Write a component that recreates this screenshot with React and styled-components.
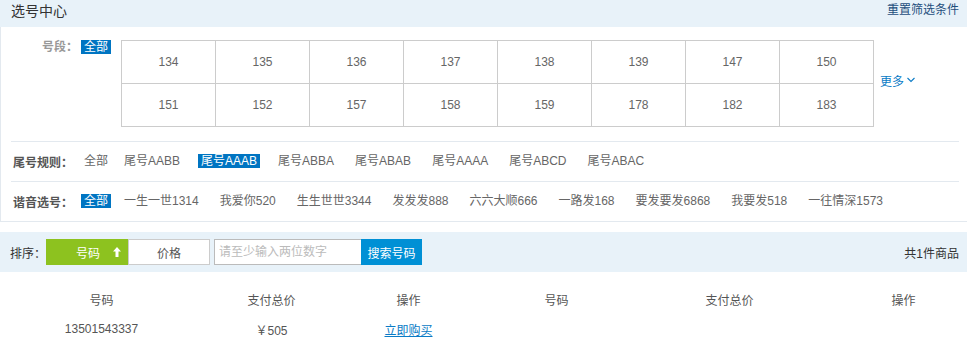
import React from 'react'
import styled, { createGlobalStyle } from 'styled-components'

const GlobalStyle = createGlobalStyle`
  body {
    margin: 0;
    background: #fff;
    font-family: 'Liberation Sans', 'Noto Sans CJK SC', sans-serif;
    font-size: 12px;
    color: #555;
  }
`

const segments = [
  '134', '135', '136', '137', '138', '139', '147', '150',
  '151', '152', '157', '158', '159', '178', '182', '183',
]

const tailRules = ['尾号AABB', '尾号AAAB', '尾号ABBA', '尾号ABAB', '尾号AAAA', '尾号ABCD', '尾号ABAC']
const homophones = [
  '一生一世1314', '我爱你520', '生生世世3344', '发发发888', '六六大顺666',
  '一路发168', '要发要发6868', '我要发518', '一往情深1573',
]

const ArrowUp = () => (
  <svg width="8" height="10" viewBox="0 0 8 10">
    <path d="M4 0 L8 4.5 L5.5 4.5 L5.5 10 L2.5 10 L2.5 4.5 L0 4.5 Z" fill="#fff" />
  </svg>
)

const Chevron = () => (
  <svg width="8" height="6" viewBox="0 0 8 6">
    <path d="M0.5 1 L4 4.5 L7.5 1" fill="none" stroke="#0a7bc6" strokeWidth="1.1" />
  </svg>
)

const App = () => (
  <Page>
    <GlobalStyle />
    <Header>
      <Title>选号中心</Title>
      <Reset>重置筛选条件</Reset>
    </Header>

    <FilterPanel>
      <SegmentRow>
        <SegmentLabel>号段：</SegmentLabel>
        <Tag $active $first>全部</Tag>
        <SegmentGrid>
          {segments.map(s => (
            <SegmentCell key={s}>{s}</SegmentCell>
          ))}
        </SegmentGrid>
        <More>
          更多 <Chevron />
        </More>
      </SegmentRow>

      <RuleRow>
        <RuleLabel>尾号规则：</RuleLabel>
        <Tag $first>全部</Tag>
        {tailRules.map(r => (
          <Tag key={r} $active={r === '尾号AAAB'}>{r}</Tag>
        ))}
      </RuleRow>

      <RuleRow>
        <RuleLabel>谐音选号：</RuleLabel>
        <Tag $active $first>全部</Tag>
        {homophones.map(h => (
          <Tag key={h}>{h}</Tag>
        ))}
      </RuleRow>
    </FilterPanel>

    <SortBar>
      <SortLabel>排序：</SortLabel>
      <SortButton $active>
        号码 <ArrowUp />
      </SortButton>
      <SortButton>价格</SortButton>
      <SearchInput placeholder="请至少输入两位数字" />
      <SearchButton>搜索号码</SearchButton>
      <Total>共1件商品</Total>
    </SortBar>

    <Table>
      <HeadCell>号码</HeadCell>
      <HeadCell>支付总价</HeadCell>
      <HeadCell>操作</HeadCell>
      <HeadCell>号码</HeadCell>
      <HeadCell>支付总价</HeadCell>
      <HeadCell $last>操作</HeadCell>
      <Cell>13501543337</Cell>
      <Cell>￥505</Cell>
      <Cell>
        <BuyLink>立即购买</BuyLink>
      </Cell>
    </Table>
  </Page>
)

const Page = styled.div`
  width: 967px;
  height: 355px;
  overflow: hidden;
`

const Header = styled.div`
  height: 27px;
  background: #e8f2f9;
  display: flex;
  justify-content: space-between;
  align-items: flex-start;
  padding: 0 8px 0 11px;
`

const Title = styled.div`
  font-size: 14px;
  line-height: 22px;
  color: #333;
`

const Reset = styled.a`
  font-size: 12px;
  line-height: 21px;
  color: #1f4f7d;
  cursor: pointer;
`

const FilterPanel = styled.div`
  border-left: 1px solid #e3e9ef;
  border-bottom: 1px solid #e3e9ef;
  padding: 0 8px 0 10px;
`

const SegmentRow = styled.div`
  display: flex;
  align-items: flex-start;
  padding: 13px 0 14px;
`

const SegmentLabel = styled.div`
  width: 70px;
  padding-right: 3px;
  box-sizing: border-box;
  text-align: right;
  font-weight: bold;
  color: #999;
  line-height: 12px;
  margin-top: 1px;
`

const SegmentGrid = styled.div`
  display: grid;
  grid-template-columns: repeat(8, 93px);
  grid-auto-rows: 42px;
  gap: 1px;
  padding: 1px;
  background: #ccc;
`

const SegmentCell = styled.div`
  background: #fff;
  display: flex;
  align-items: center;
  justify-content: center;
  color: #666;
  cursor: pointer;
`

const More = styled.a`
  align-self: center;
  margin: -7px 0 0 6px;
  color: #0a7bc6;
  display: flex;
  align-items: center;
  gap: 3px;
  cursor: pointer;
`

const RuleRow = styled.div`
  height: 40px;
  border-top: 1px solid #e3e9ef;
  display: flex;
  align-items: center;
  padding-bottom: 1px;
  box-sizing: border-box;
`

const RuleLabel = styled.div`
  width: 70px;
  padding-left: 2px;
  box-sizing: border-box;
  font-weight: bold;
  color: #555;
`

const Tag = styled.span`
  padding: 0 3px;
  line-height: 14px;
  margin-right: ${p => (p.$first ? '10px' : '15px')};
  background: ${p => (p.$active ? '#0075c2' : 'transparent')};
  color: ${p => (p.$active ? '#fff' : '#666')};
  white-space: nowrap;
  cursor: pointer;
`

const SortBar = styled.div`
  margin-top: 10px;
  height: 40px;
  background: #e8f2f9;
  display: flex;
  align-items: center;
  padding: 0 8px 0 10px;
`

const SortLabel = styled.span`
  width: 36px;
  color: #333;
`

const SortButton = styled.button`
  width: 82px;
  height: 26px;
  box-sizing: border-box;
  border: 1px solid ${p => (p.$active ? '#8dc21f' : '#ccc')};
  background: ${p => (p.$active ? '#8dc21f' : '#fff')};
  color: ${p => (p.$active ? '#fff' : '#555')};
  font: inherit;
  display: flex;
  align-items: center;
  justify-content: ${p => (p.$active ? 'flex-start' : 'center')};
  gap: 13px;
  padding: ${p => (p.$active ? '0 0 0 29px' : '0')};
  cursor: pointer;
`

const SearchInput = styled.input`
  margin-left: 4px;
  width: 147px;
  height: 26px;
  box-sizing: border-box;
  border: 1px solid #bbb;
  border-right: none;
  padding: 0 4px;
  font: inherit;
  color: #555;
  outline: none;
  &::placeholder {
    color: #bbb;
  }
`

const SearchButton = styled.button`
  width: 61px;
  height: 26px;
  border: none;
  background: #0090d5;
  color: #fff;
  font: inherit;
  padding: 0;
  cursor: pointer;
`

const Total = styled.span`
  margin-left: auto;
  color: #333;
`

const Table = styled.div`
  display: grid;
  grid-template-columns: 203px 137px 137px 159px 187px 1fr;
  grid-auto-rows: 30px;
  padding-top: 12px;
`

const HeadCell = styled.div`
  display: flex;
  align-items: center;
  justify-content: center;
  padding-left: ${p => (p.$last ? '17px' : '0')};
  color: #555;
`

const Cell = styled.div`
  display: flex;
  align-items: center;
  justify-content: center;
  color: #555;
`

const BuyLink = styled.a`
  color: #0a7bc6;
  text-decoration: underline;
  cursor: pointer;
`

export default App
